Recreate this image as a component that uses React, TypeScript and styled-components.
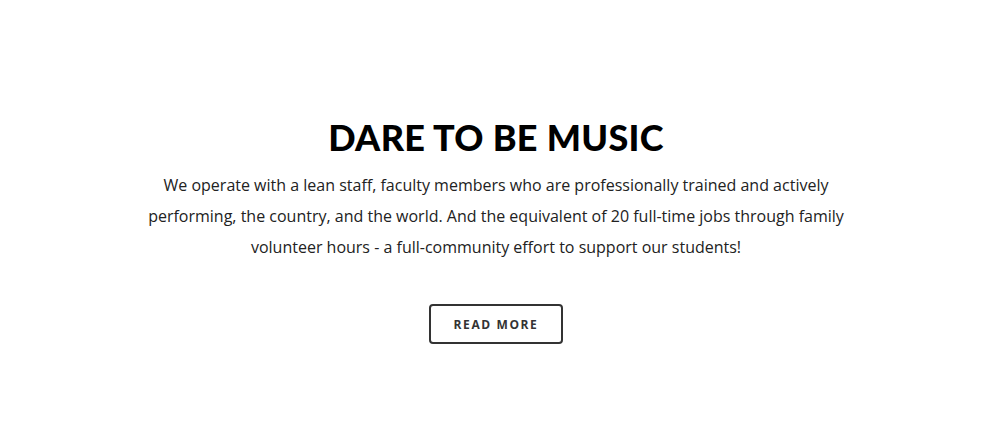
import * as React from "react";
import styled, { createGlobalStyle } from "styled-components";

const GlobalStyle = createGlobalStyle`
  body {
    margin: 0;
    background: #fff;
    font-family: "Open Sans", sans-serif;
  }
`;

const Section = styled.section`
  display: flex;
  flex-direction: column;
  align-items: center;
  padding: 112px 20px 0;
  height: 440px;
  box-sizing: border-box;
`;

const Heading = styled.h2`
  margin: 0;
  font-family: "Lato", sans-serif;
  font-weight: 900;
  font-size: 36px;
  line-height: 50px;
  letter-spacing: 0.3px;
  color: #000;
  text-transform: uppercase;
`;

const Text = styled.p`
  margin: 8px 0 0;
  width: 700px;
  text-align: center;
  font-size: 16px;
  line-height: 31px;
  color: #222;
`;

const Button = styled.a`
  margin-top: 41px;
  display: inline-flex;
  align-items: center;
  justify-content: center;
  width: 134px;
  height: 40px;
  box-sizing: border-box;
  border: 2px solid #333;
  border-radius: 4px;
  font-size: 12px;
  font-weight: 700;
  letter-spacing: 1.6px;
  color: #333;
  text-transform: uppercase;
  cursor: pointer;
`;

const App = () => (
  <>
    <GlobalStyle />
    <Section>
      <Heading>Dare to be music</Heading>
      <Text>
        We operate with a lean staff, faculty members who are professionally trained and actively
        performing, the country, and the world. And the equivalent of 20 full-time jobs through family
        volunteer hours - a full-community effort to support our students!
      </Text>
      <Button>Read more</Button>
    </Section>
  </>
);

export default App;
